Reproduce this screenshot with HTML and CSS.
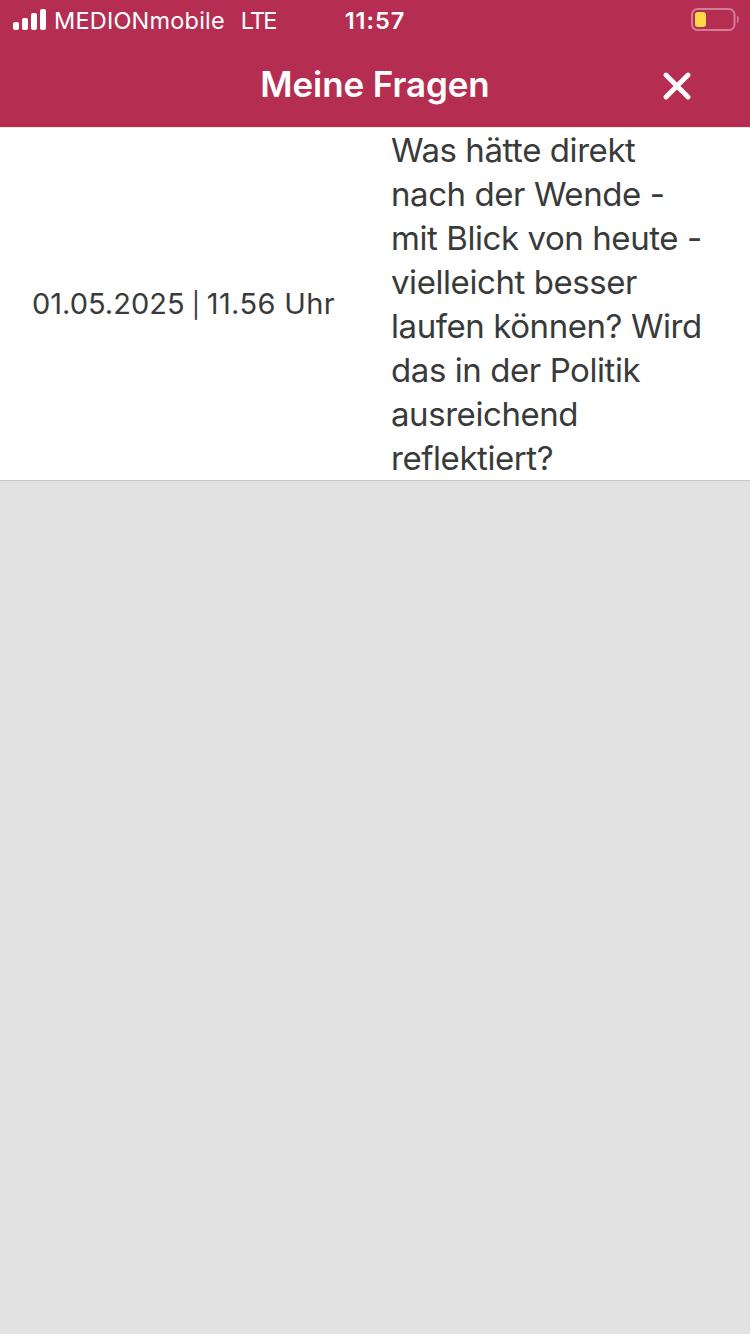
FILE: index.html
```html
<!DOCTYPE html>
<html lang="de">
<head>
    <meta charset="UTF-8">
    <meta name="viewport" content="width=device-width, initial-scale=1.0">
    <title>Meine Fragen</title>
    <link rel="stylesheet" href="styles.css">
</head>
<body>
    <header>
        <div class="status-bar">
            <div class="network">
                <svg class="signal" width="33" height="21" viewBox="0 0 33 21" fill="#fff">
                    <rect x="0" y="13" width="6" height="8" rx="2"/>
                    <rect x="9" y="9" width="6" height="12" rx="2"/>
                    <rect x="18" y="4" width="6" height="17" rx="2"/>
                    <rect x="27" y="0" width="6" height="21" rx="2"/>
                </svg>
                <span class="carrier">MEDIONmobile</span>
                <span class="lte">LTE</span>
            </div>
            <span class="clock">11:57</span>
            <svg class="battery" width="48" height="23" viewBox="0 0 48 23">
                <rect x="1" y="1" width="42.5" height="21" rx="5.5" fill="none" stroke="#d27c9c" stroke-width="2"/>
                <rect x="4" y="4" width="11" height="15" rx="3" fill="#fcd949"/>
                <path d="M46 7.5c2.4 1.6 2.4 6.4 0 8z" fill="#d27c9c"/>
            </svg>
        </div>
        <div class="title-bar">
            <h1>Meine Fragen</h1>
            <button class="close" aria-label="Schließen">
                <svg width="28" height="28" viewBox="0 0 28 28" fill="none" stroke="#fff" stroke-width="4.8" stroke-linecap="round">
                    <path d="M3 3l22 22M25 3L3 25"/>
                </svg>
            </button>
        </div>
    </header>
    <main>
        <div class="question">
            <div class="date">01.05.2025 <span class="separator">|</span> <span class="time">11.56 Uhr</span></div>
            <div class="text">Was hätte direkt nach der Wende - mit Blick von heute - vielleicht besser laufen können? Wird das in der Politik ausreichend reflektiert?</div>
        </div>
    </main>
</body>
</html>
```
FILE: styles.css
```css
* {
    box-sizing: border-box;
}
body {
    min-height: 100vh;
    margin: 0;
    background: #e2e2e2;
    font-family: Inter, "Liberation Sans", sans-serif;
    color: #393a3a;
}
header {
    height: 127px;
    background: #b52e52;
    color: #fff;
}
.status-bar {
    display: grid;
    grid-template-columns: 1fr auto 1fr;
    height: 41px;
    padding: 0 11px 0 13px;
    font-size: 24px;
    line-height: 42px;
}
.network {
    display: flex;
}
.signal {
    margin-top: 9px;
}
.carrier {
    margin-left: 8px;
    font-size: 23.5px;
    letter-spacing: 0.2px;
}
.lte {
    margin-left: 16px;
    font-size: 23.5px;
    letter-spacing: -1.9px;
}
.clock {
    margin-left: -2px;
    font-weight: 600;
    font-size: 23.5px;
    letter-spacing: 1px;
}
.battery {
    justify-self: end;
    margin-top: 8px;
}
.title-bar {
    display: grid;
    grid-template-columns: 1fr auto 1fr;
    align-items: center;
    height: 86px;
    padding: 0 59px;
}
h1 {
    grid-column: 2;
    margin: 0;
    font-size: 35px;
    font-weight: 600;
    line-height: 44px;
    letter-spacing: -0.1px;
}
.close {
    justify-self: end;
    display: flex;
    margin-top: 4px;
    padding: 0;
    border: 0;
    background: none;
}
.question {
    display: grid;
    grid-template-columns: 359px 1fr;
    align-items: center;
    height: 354px;
    padding: 0 32px;
    background: #fff;
    border-top: 1px solid #ece6e8;
    border-bottom: 1px solid #c8c8c8;
}
.date {
    padding-bottom: 2px;
    font-size: 29px;
    white-space: nowrap;
}
.separator {
    display: inline-block;
    width: 8px;
    margin: 0 -1px;
    font-size: 25px;
    text-align: center;
}
.time {
    letter-spacing: 0.35px;
}
.text {
    font-size: 33px;
    line-height: 44px;
    letter-spacing: -0.43px;
}
```
